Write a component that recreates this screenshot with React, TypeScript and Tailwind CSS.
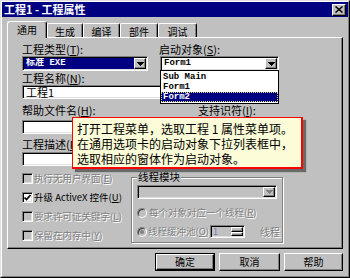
import React from 'react'

const raised =
  'border border-t-white border-l-white border-r-black border-b-black shadow-[inset_-1px_-1px_0_#808080]'
const sunken =
  'border border-t-[#808080] border-l-[#808080] border-r-white border-b-white shadow-[inset_1px_1px_0_#000,inset_-1px_-1px_0_#dfdfdf]'
const dim = 'text-[#808080] [text-shadow:1px_1px_0_#fff]'
const mono = "font-['Liberation_Mono','Noto_Sans_CJK_SC',monospace]"

function Arrow({ color = '#000' }: { color?: string }) {
  return (
    <svg width="7" height="4" viewBox="0 0 7 4" shapeRendering="crispEdges">
      <path d="M0 0h7v1h-1v1h-1v1h-1v1h-1v-1h-1v-1h-1v-1h-1z" fill={color} />
    </svg>
  )
}

function Label({ text, k, colon = true, className = '' }: { text: string; k: string; colon?: boolean; className?: string }) {
  return (
    <span className={`whitespace-nowrap ${className}`}>
      {text}(<u>{k}</u>){colon ? ':' : ''}
    </span>
  )
}

function Combo({
  className = '',
  field = 'bg-white',
  disabled = false,
  children,
}: {
  className?: string
  field?: string
  disabled?: boolean
  children?: React.ReactNode
}) {
  return (
    <div className={`flex p-[1px] ${sunken} ${className}`}>
      <div className={`flex min-w-0 flex-1 items-center overflow-hidden pl-[2px] ${mono} text-[9px] font-bold leading-none ${field}`}>
        {children}
      </div>
      <div className={`flex w-[12px] items-center justify-center bg-[#c0c0c0] ${raised}`}>
        <Arrow color={disabled ? '#808080' : '#000'} />
      </div>
    </div>
  )
}

function TextBox({ className = '', children }: { className?: string; children?: React.ReactNode }) {
  return (
    <div className={`flex h-[14px] items-center overflow-hidden bg-white p-[1px] pl-[3px] text-[11px] leading-none ${sunken} ${className}`}>
      {children}
    </div>
  )
}

function Check({ checked = false, disabled = false }: { checked?: boolean; disabled?: boolean }) {
  return (
    <div className={`flex h-[11px] w-[11px] shrink-0 items-center justify-center p-[1px] ${sunken} ${disabled ? 'bg-[#c0c0c0]' : 'bg-white'}`}>
      {checked && (
        <svg width="7" height="7" viewBox="0 0 7 7">
          <path d="M0.5 3.5l2 2 4-4.5" stroke="#000" strokeWidth="1.6" fill="none" />
        </svg>
      )}
    </div>
  )
}

function Radio({ checked = false }: { checked?: boolean }) {
  return (
    <div className="flex h-[10px] w-[10px] shrink-0 items-center justify-center rounded-full border border-t-[#808080] border-l-[#808080] border-r-white border-b-white bg-[#c0c0c0] shadow-[inset_1px_1px_0_#404040]">
      {checked && <div className="h-[4px] w-[4px] rounded-full bg-[#808080]" />}
    </div>
  )
}

function Button({ label, primary = false }: { label: string; primary?: boolean }) {
  return (
    <div className={`flex h-[18px] ${primary ? 'w-[60px] border border-black' : label === '取消' ? 'w-[61px]' : 'w-[59px]'}`}>
      <div className={`flex flex-1 items-center justify-center bg-[#c0c0c0] text-[10px] leading-none ${raised}`}>{label}</div>
    </div>
  )
}

const tabs = [
  { name: '生成', w: 'w-[36px]' },
  { name: '编译', w: 'w-[37px]' },
  { name: '部件', w: 'w-[38px]' },
  { name: '调试', w: 'w-[39px]' },
]

export default function App() {
  return (
    <div className="h-[278px] w-[350px] overflow-hidden border border-t-[#dfdfdf] border-l-[#dfdfdf] border-r-black border-b-black bg-[#c0c0c0] font-['Noto_Sans_CJK_SC',sans-serif] text-black">
      <div className="flex h-full flex-col border border-t-white border-l-white border-r-[#808080] border-b-[#808080]">
        {/* title bar */}
        <div className="flex h-[15px] items-center justify-between bg-[#000080] px-[2px]">
          <span className="text-[11px] font-bold leading-none text-white">工程1 - 工程属性</span>
          <div className={`flex h-[12px] w-[14px] items-center justify-center bg-[#c0c0c0] ${raised}`}>
            <svg width="8" height="7" viewBox="0 0 8 7">
              <path d="M0.5 0.5l7 6M7.5 0.5l-7 6" stroke="#000" strokeWidth="1.5" />
            </svg>
          </div>
        </div>

        {/* tabs */}
        <div className="flex h-[20px] items-end px-[5px] text-[10px] leading-[12px]">
          <div className="relative z-10 -mb-px flex h-[17px] w-[40px] justify-center rounded-t-[3px] border-t border-l border-r border-t-white border-l-white border-r-black bg-[#c0c0c0] pt-[2px] shadow-[inset_-1px_0_0_#808080]">
            通用
          </div>
          {tabs.map(t => (
            <div
              key={t.name}
              className={`flex h-[14px] ${t.w} justify-center rounded-t-[2px] border-t border-l border-r border-t-white border-l-white border-r-black pt-[2px] shadow-[inset_-1px_0_0_#808080]`}
            >
              {t.name}
            </div>
          ))}
        </div>

        {/* tab panel */}
        <div className="relative mx-[5px] h-[212px] border border-t-white border-l-white border-r-black border-b-black pl-[14px] pt-[4px] text-[11px] leading-[14px] shadow-[inset_-1px_-1px_0_#808080]">
          <div className="flex h-[14px] items-center">
            <Label className="w-[137px]" text="工程类型" k="T" />
            <Label text="启动对象" k="S" />
          </div>
          <div className="flex gap-[12px]">
            <Combo className="h-[15px] w-[126px]" field="bg-[#000080] text-white">
              标准 EXE
            </Combo>
            <Combo className="h-[15px] w-[119px]">Form1</Combo>
          </div>

          <div className="flex h-[14px] items-center">
            <Label text="工程名称" k="N" />
          </div>
          <TextBox className="w-[160px]">工程1</TextBox>

          <div className="mt-[4px] flex h-[14px] items-center">
            <Label className="w-[176px]" text="帮助文件名" k="H" />
            <Label text="支持识符" k="I" />
          </div>
          <div className="mt-[3px] flex gap-[16px]">
            <TextBox className="w-[160px]" />
            <TextBox className="w-[82px]" />
          </div>

          <div className="mt-[3px] flex h-[14px] items-center">
            <Label text="工程描述" k="P" />
          </div>
          <TextBox className="mt-[1px] w-[258px]" />

          <div className="mt-[3px] flex">
            <div className="w-[109px] text-[9.5px] leading-none">
              <div className="flex h-[19px] items-center gap-[1px] whitespace-nowrap">
                <Check disabled />
                <span className={dim}>
                  执行无用户界面(<u>E</u>)
                </span>
              </div>
              <div className="flex h-[19px] items-center gap-[1px] whitespace-nowrap">
                <Check checked />
                <span>
                  升级 ActiveX 控件(<u>U</u>)
                </span>
              </div>
              <div className="flex h-[19px] items-center gap-[1px] whitespace-nowrap">
                <Check disabled />
                <span className={dim}>
                  要求许可证关键字(<u>L</u>)
                </span>
              </div>
              <div className="flex h-[19px] items-center gap-[1px] whitespace-nowrap">
                <Check disabled />
                <span className={dim}>
                  保留在内存中(<u>Y</u>)
                </span>
              </div>
            </div>

            <div className="relative mt-[8px] h-[66px] w-[152px] border border-[#808080] pl-[5px] pt-[7px] shadow-[inset_1px_1px_0_#fff,1px_1px_0_#fff]">
              <span className="absolute -top-[8px] left-[5px] bg-[#c0c0c0] px-[1px] text-[10.5px] leading-[14px]">
                线程模块
              </span>
              <Combo className="h-[14px] w-[140px]" field="bg-[#c0c0c0]" disabled />
              <div className="mt-[4px] flex h-[19px] items-center gap-[2px] whitespace-nowrap text-[9.5px] leading-none">
                <Radio />
                <span className={dim}>
                  每个对象对应一个线程(<u>R</u>)
                </span>
              </div>
              <div className="flex h-[19px] items-center gap-[1px] whitespace-nowrap text-[9.5px] leading-none">
                <Radio checked />
                <span className={dim}>
                  线程缓冲池(<u>O</u>)
                </span>
                <div className={`flex h-[13px] w-[35px] p-[1px] ${sunken}`}>
                  <div className="flex flex-1 items-center bg-[#c0c0c0] pl-[1px] text-[9px] leading-none text-[#7080b0]">1</div>
                  <div className="flex w-[12px] flex-col">
                    <div className={`flex flex-1 items-center justify-center bg-[#c0c0c0] ${raised}`} />
                    <div className={`flex flex-1 items-center justify-center bg-[#c0c0c0] ${raised}`} />
                  </div>
                </div>
                <span className={`ml-[14px] text-[10px] ${dim}`}>线程</span>
              </div>
            </div>
          </div>

          {/* open startup-object list */}
          <div className={`absolute left-[152px] top-[32px] w-[119px] border border-black bg-white py-[1px] ${mono} text-[9px] font-bold leading-[10px]`}>
            <div className="h-[10px] pl-[2px]">Sub Main</div>
            <div className="h-[10px] pl-[2px]">Form1</div>
            <div className="h-[10px] border border-dotted border-[#e0e080] bg-[#000080] pl-[1px] leading-[8px] text-white">Form2</div>
          </div>

          {/* callout */}
          <div className="absolute left-[64px] top-[79px] h-[52px] w-[231px] border border-r-2 border-b-2 border-[#ff0000] bg-[#fcfcd8] pl-[4px] pt-[3px] text-[12px] leading-[15px] shadow-[3px_3px_1px_rgba(0,0,0,0.45)]">
            <p>打开工程菜单，选取工程 1 属性菜单项。</p>
            <p>在通用选项卡的启动对象下拉列表框中，</p>
            <p>选取相应的窗体作为启动对象。</p>
          </div>
        </div>

        {/* buttons */}
        <div className="mt-[4px] flex justify-end gap-[4px] pr-[5px]">
          <Button label="确定" primary />
          <Button label="取消" />
          <Button label="帮助" />
        </div>
      </div>
    </div>
  )
}
